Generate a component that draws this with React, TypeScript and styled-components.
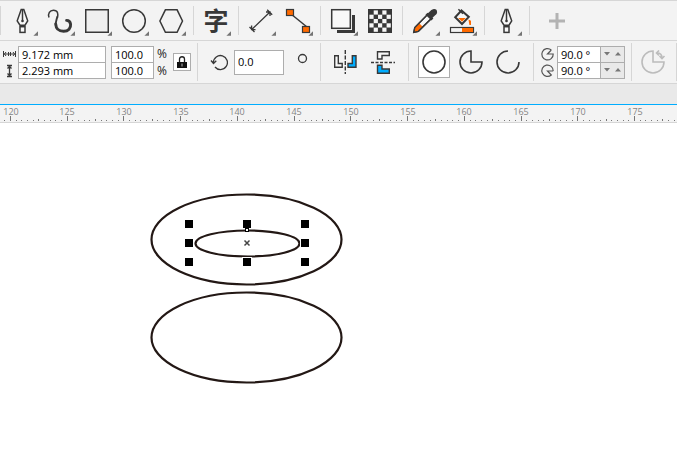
import React, { useEffect, useState } from "react";
import styled, { createGlobalStyle } from "styled-components";

const INK = "#383838";
const ORANGE = "#ff6a00";
const BLUE = "#00adff";
const EDGE = "#d6d6d6";
const FIELD_EDGE = "#adadad";
const UI_FONT = '"Open Sans", "Noto Sans", sans-serif';

const GlobalStyle = createGlobalStyle`
  *, *::before, *::after { box-sizing: border-box; }
  body { margin: 0; background: #fff; font-family: ${UI_FONT}; font-size: 11px; }
  button, input { font: inherit; color: #000; }
  svg { display: block; }
`;

const App = styled.div`
  display: flex;
  flex-direction: column;
  min-height: 100vh;
  overflow: hidden;
`;

const Bar = styled.div<{ $height: number }>`
  display: flex;
  flex: none;
  height: ${(p) => p.$height}px;
  background: #f3f3f3;
  border-top: 1px solid ${EDGE};
`;

const ToolGroup = styled.div`
  display: flex;
  flex: none;
  margin: 5px 0;
  padding-right: 7px;
  align-items: center;
  border-left: 1px solid ${EDGE};
`;

const ToolButton = styled.button<{ $width?: number }>`
  flex: none;
  width: ${(p) => p.$width ?? 37}px;
  height: 39px;
  padding: 0;
  border: 0;
  background: none;
`;

const PropertyGroup = styled.div<{ $pad: number; $gap?: number; $last?: boolean }>`
  display: flex;
  flex: none;
  align-items: center;
  gap: ${(p) => p.$gap ?? 0}px;
  margin: 2px 0;
  padding: 0 ${(p) => p.$pad}px;
  border-left: 1px solid ${EDGE};
  border-right: ${(p) => (p.$last ? `1px solid ${EDGE}` : "0")};
  &:first-child { border-left: 0; padding-left: 3px; }
`;

const Row = styled.div<{ $gap: number }>`
  display: flex;
  align-items: center;
  gap: ${(p) => p.$gap}px;
`;

const Stack = styled.div`
  display: flex;
  flex-direction: column;
  gap: 1px;
  span { width: 11px; height: 16px; line-height: 16px; font-size: 12px; color: #222; }
`;

const FieldPair = styled.div<{ $width: number }>`
  display: flex;
  flex-direction: column;
  width: ${(p) => p.$width}px;
  gap: 1px;
  padding: 1px;
  background: ${FIELD_EDGE};
`;

const Field = styled.input`
  flex: 1;
  width: 100%;
  min-width: 0;
  height: 15px;
  padding: 0 3px;
  border: 0;
  border-radius: 0;
  background: #fff;
  outline: 0;
`;

const AngleField = styled.input`
  width: 50px;
  height: 25px;
  padding: 0 3px 2px;
  border: 1px solid ${FIELD_EDGE};
  background: #fff;
  outline: 0;
`;

const SpinRow = styled.div`
  display: flex;
  height: 15px;
  background: #e9e9e9;
`;

const SpinButton = styled.button<{ $first?: boolean }>`
  flex: none;
  display: grid;
  place-items: center;
  width: 12px;
  height: 15px;
  padding: 0;
  border: 0;
  background: #e9e9e9;
  ${(p) => p.$first && `border-left: 1px solid ${FIELD_EDGE};`}
`;

const BoxButton = styled.button<{ $size: number; $on?: boolean }>`
  flex: none;
  display: grid;
  place-items: center;
  width: ${(p) => p.$size}px;
  height: ${(p) => p.$size}px;
  padding: 0;
  border: 1px solid ${(p) => (p.$on ? FIELD_EDGE : "transparent")};
  background: ${(p) => (p.$on ? "#fff" : "none")};
`;

const TabStrip = styled.div`
  flex: none;
  height: 21px;
  background: #e9e9e9;
  border-top: 1px solid ${EDGE};
`;

const RulerBand = styled.div`
  flex: none;
  height: 19px;
  background: #f3f3f3;
  border-top: 1px solid ${BLUE};
  border-bottom: 1px solid ${EDGE};
  svg { width: 100%; height: 17px; }
  text { font-family: ${UI_FONT}; font-size: 9px; fill: #858585; text-anchor: middle; }
`;

const Canvas = styled.main`
  flex: 1;
  display: flex;
  background: #fff;
  svg { width: 100%; height: 328px; }
`;

const Glyph = styled.text`
  font-family: "Noto Sans CJK SC", sans-serif;
  font-size: 25px;
  font-weight: 700;
  text-anchor: middle;
  fill: ${INK};
`;

type ToolProps = { label: string; children: React.ReactNode; flyout?: boolean; width?: number };

const Tool = ({ label, children, flyout = true, width = 37 }: ToolProps) => (
  <ToolButton type="button" aria-label={label} title={label} $width={width}>
    <svg width={width} height="39" viewBox={`0 1 ${width} 39`} fill="none" stroke={INK} strokeWidth="1.5">
      {children}
      {flyout && <path d="M37 31.3V35.7H32.4Z" fill="#747474" stroke="none" />}
    </svg>
  </ToolButton>
);

const Pen = () => (
  <>
    <path d="M20.2 9.5H22.8L26.7 20.8L24 25.2H19L16.2 20.8Z" fill="#f8f8f8" />
    <path d="M21.5 9V20.5" />
    <circle cx="21.5" cy="21" r="1.3" fill={INK} stroke="none" />
    <rect x="19" y="26.7" width="5" height="5.7" fill="#f8f8f8" />
  </>
);

const checks = Array.from({ length: 25 }, (_, i) => i).filter((i) => i % 2 === 1);
const PIE = "M12 1V12H23A11 11 0 1 1 12 1Z";

const Mini = ({ path }: { path: string }) => (
  <svg width="15" height="16" viewBox="0 0 15 16" fill="none" stroke="#555" strokeWidth="1.2">
    <path d={path} />
  </svg>
);

const Spinner = ({ label }: { label: string }) => (
  <SpinRow>
    <Field aria-label={label} defaultValue="90.0 °" />
    <SpinButton type="button" $first aria-label={`${label} down`}>
      <svg width="6" height="4"><path d="M0 0H6L3 3.5Z" fill="#777" /></svg>
    </SpinButton>
    <SpinButton type="button" aria-label={`${label} up`}>
      <svg width="6" height="4"><path d="M0 3.5H6L3 0Z" fill="#777" /></svg>
    </SpinButton>
  </SpinRow>
);

const RULER_START = 10.5;
const TICK = 5.673;

const Ruler = () => {
  const [width, setWidth] = useState(window.innerWidth);
  useEffect(() => {
    const update = () => setWidth(window.innerWidth);
    window.addEventListener("resize", update);
    return () => window.removeEventListener("resize", update);
  }, []);
  const tickCount = Math.ceil(width / TICK);
  const labelCount = Math.floor((width - RULER_START - 10) / (TICK * 10)) + 1;
  return (
    <RulerBand>
      <svg aria-label="Ruler">
        {Array.from({ length: tickCount + 1 }, (_, n) => {
          const i = n - 1;
          const size = i % 10 === 0 ? 5 : i % 5 === 0 ? 2 : 1;
          return (
            <rect
              key={i}
              x={Math.round(RULER_START + i * TICK - 0.5)}
              y={i % 10 === 0 ? 11 : 16 - size}
              width="1"
              height={size}
              fill="#777"
            />
          );
        })}
        {Array.from({ length: labelCount }, (_, i) => (
          <text key={i} x={Math.round(RULER_START + i * TICK * 10)} y="10">{120 + i * 5}</text>
        ))}
      </svg>
    </RulerBand>
  );
};

const handles = [189, 247, 305].flatMap((x) =>
  [101, 120, 139].map((y) => ({ x, y })).filter((h) => h.x !== 247 || h.y !== 120)
);

export default function DrawingApp() {
  return (
    <App>
      <GlobalStyle />
      <Bar $height={40} role="toolbar" aria-label="Tools">
        <ToolGroup>
          <Tool label="Pen"><Pen /></Tool>
          <Tool label="Artistic media">
            <path d="M11 17.5C9.6 13.5 11.8 10.2 15.4 10.2C20 10.2 20.3 13.8 19.4 17.5" />
            <path d="M19.4 16.5C18.4 20.5 17.3 22.5 17.8 25.5" strokeWidth="1.9" />
            <path d="M17.7 24C18 29 21.2 31.3 25.6 31.3C30.5 31.3 33 28 32.6 24.2C32.2 21.5 30.6 20.4 28.6 20.4" strokeWidth="2.9" strokeLinecap="round" />
          </Tool>
          <Tool label="Rectangle">
            <rect x="10.75" y="9.75" width="22.5" height="22.5" fill="#efefef" />
          </Tool>
          <Tool label="Ellipse">
            <circle cx="22" cy="21" r="11.3" />
          </Tool>
          <Tool label="Polygon">
            <path d="M16.4 9.8H28.1L33.5 21L28.1 32.3H16.4L10.9 21Z" />
          </Tool>
        </ToolGroup>
        <ToolGroup>
          <Tool label="Text"><Glyph x="22" y="30" stroke="none">字</Glyph></Tool>
        </ToolGroup>
        <ToolGroup>
          <Tool label="Dimension">
            <path d="M12.8 29.5L30.7 12.2M10.5 27L15.5 32M28.2 9.8L33.2 14.8M12.6 25.5V29.7H16.5M27 12H31V16" strokeWidth="1.3" />
          </Tool>
          <Tool label="Connector">
            <path d="M15 14L31 27" />
            <rect x="10.5" y="9.5" width="7" height="6" fill={ORANGE} strokeWidth="1.2" />
            <rect x="26.5" y="26.5" width="7" height="6" fill={ORANGE} strokeWidth="1.2" />
          </Tool>
        </ToolGroup>
        <ToolGroup>
          <Tool label="Drop shadow">
            <rect x="10.7" y="9.7" width="18.6" height="18.6" fill="#f8f8f8" />
            <path d="M32.5 15V31.4H16" strokeWidth="3" />
          </Tool>
          <Tool label="Transparency" flyout={false}>
            <rect x="10" y="9" width="24" height="24" fill={INK} stroke="none" />
            {checks.map((i) => (
              <rect key={i} x={11.4 + (i % 5) * 4.3} y={10.4 + Math.floor(i / 5) * 4.3} width="4.2" height="4.2" fill="#f6f6f6" stroke="none" />
            ))}
          </Tool>
        </ToolGroup>
        <ToolGroup>
          <Tool label="Eyedropper">
            <path d="M24.5 14.6L28.4 18.5L15.3 31.3L10.8 32.3L11.8 27.6Z" fill="#f8f8f8" />
            <path d="M16.5 23.6L19.7 26.8L15 31.2L11.1 32.1L12 27.9Z" fill={ORANGE} stroke="none" />
            <path d="M24.5 14.6L11.8 27.6L10.8 32.3L15.3 31.3L28.4 18.5" strokeWidth="1.3" />
            <path d="M23.5 13.7L29.4 19.6" strokeWidth="2.8" />
            <path d="M25.8 16.8L30.8 12.2" strokeWidth="6.4" />
            <circle cx="31.2" cy="12" r="2.9" fill={INK} stroke="none" />
          </Tool>
          <Tool label="Interactive fill">
            <path d="M21.5 10.5L28.8 16.9L22 24L15.2 17.2Z" fill="#f8f8f8" strokeWidth="2" />
            <path d="M18.2 18H25.8L22 21.8Z" fill={ORANGE} stroke="none" />
            <path d="M28.5 19.5L31 20.8V25H29.4Z" fill={ORANGE} stroke="none" />
            <path d="M18.4 9.2L23 13.8" />
            <rect x="10.5" y="27.5" width="23" height="5" fill="#f3f3f3" strokeWidth="1.2" />
            <rect x="22" y="28" width="11" height="4" fill={ORANGE} stroke="none" />
          </Tool>
        </ToolGroup>
        <ToolGroup>
          <Tool label="Outline pen"><Pen /></Tool>
        </ToolGroup>
        <ToolGroup>
          <Tool label="Customize" flyout={false} width={54}>
            <path d="M19 21H35M27 13V29" stroke="#b3b3b3" strokeWidth="3" />
          </Tool>
        </ToolGroup>
      </Bar>

      <Bar $height={43} role="toolbar" aria-label="Properties">
        <PropertyGroup $pad={6} $gap={5}>
          <Row $gap={1}>
            <Stack>
              <svg width="14" height="16" fill="none" stroke={INK}>
                <path d="M.5 5V11M12.5 5V11M1 8H12M3 6L1.5 8L3 10M10 6L11.5 8L10 10" /><path d="M5.5 6V10M7.5 6V10" />
              </svg>
              <svg width="14" height="16" fill="none" stroke={INK} strokeWidth="1.3">
                <path d="M4 2.5H9M4 13.5H9M6.5 3V13M4.5 5.5L6.5 3.5L8.5 5.5M4.5 10.5L6.5 12.5L8.5 10.5" />
              </svg>
            </Stack>
            <FieldPair $width={88}>
              <Field aria-label="Width" defaultValue="9.172 mm" />
              <Field aria-label="Height" defaultValue="2.293 mm" />
            </FieldPair>
          </Row>
          <Row $gap={3}>
            <FieldPair $width={43}>
              <Field aria-label="Horizontal scale" defaultValue="100.0" />
              <Field aria-label="Vertical scale" defaultValue="100.0" />
            </FieldPair>
            <Stack><span>%</span><span>%</span></Stack>
          </Row>
          <BoxButton type="button" $size={18} $on aria-label="Lock ratio">
            <svg width="12" height="14" fill="none">
              <path d="M3.5 7V4C3.5 1 8.5 1 8.5 4V7" stroke="#222" strokeWidth="1.3" />
              <rect x="1" y="7" width="10" height="6" fill="#111" />
              <path d="M6 8.5V11.5" stroke="#bbb" />
            </svg>
          </BoxButton>
        </PropertyGroup>
        <PropertyGroup $pad={12} $gap={6}>
          <svg width="18" height="24" fill="none" stroke={INK} strokeWidth="1.3">
            <path d="M3.4 12.5A7 7 0 1 1 5 17M1 10.5L3.5 13.5L6.3 10.8" />
          </svg>
          <Row $gap={12}>
            <AngleField aria-label="Rotation angle" defaultValue="0.0" />
            <svg width="12" height="24" fill="none" stroke={INK} strokeWidth="1.3"><circle cx="6.5" cy="8.5" r="4" /></svg>
          </Row>
        </PropertyGroup>
        <PropertyGroup $pad={9} $gap={5}>
          <BoxButton type="button" $size={32} aria-label="Mirror horizontally">
            <svg width="24" height="24" fill="none" stroke={INK} strokeWidth="1.4">
              <path d="M.7 5.7H4.3V13.5H8.2V17.3H.7Z" fill="#f8f8f8" />
              <path d="M22 5.7H18.3V13.5H14V17.3H22Z" fill={BLUE} />
              <path d="M11.3 0V24" strokeDasharray="4 1.5" />
            </svg>
          </BoxButton>
          <BoxButton type="button" $size={32} aria-label="Mirror vertically">
            <svg width="24" height="24" fill="none" stroke={INK} strokeWidth="1.4">
              <path d="M6.5 1.7H18.3V5.5H11V9H6.5Z" fill="#f8f8f8" />
              <path d="M6.5 15.3H11V19H18.3V23.2H6.5Z" fill={BLUE} />
              <path d="M0 12.5H24" strokeDasharray="3 1.5" />
            </svg>
          </BoxButton>
        </PropertyGroup>
        <PropertyGroup $pad={9} $gap={5}>
          <BoxButton type="button" $size={32} $on aria-label="Ellipse">
            <svg width="24" height="24" fill="none" stroke={INK} strokeWidth="1.6"><circle cx="12" cy="12" r="11" /></svg>
          </BoxButton>
          <BoxButton type="button" $size={32} aria-label="Pie">
            <svg width="24" height="24" fill="none" stroke={INK} strokeWidth="1.6"><path d={PIE} /></svg>
          </BoxButton>
          <BoxButton type="button" $size={32} aria-label="Arc">
            <svg width="24" height="24" fill="none" stroke={INK} strokeWidth="1.6"><path d="M23 12A11 11 0 1 1 12 1" /></svg>
          </BoxButton>
        </PropertyGroup>
        <PropertyGroup $pad={6} $gap={2}>
          <Stack>
            <Mini path="M11.3 4A5.7 5.7 0 1 0 13.2 8H7.5L11.3 4M7.5 8L10 5.4" />
            <Mini path="M13.2 8A5.7 5.7 0 1 0 11.3 12L7.5 8H13.2M7.5 8L10 10.6" />
          </Stack>
          <FieldPair $width={68}>
            <Spinner label="Starting angle" />
            <Spinner label="Ending angle" />
          </FieldPair>
        </PropertyGroup>
        <PropertyGroup $pad={6} $last>
          <BoxButton type="button" $size={32} disabled aria-label="Change direction">
            <svg width="26" height="24" fill="none" stroke="#bcbcbc" strokeWidth="1.6">
              <path d="M12 1V12H23A11 11 0 1 1 12 1Z" />
              <path d="M16 3Q21 3 21 8M18 .5L15.5 3L18 5.5M18.5 6L21 8.5L23.5 6" />
            </svg>
          </BoxButton>
        </PropertyGroup>
      </Bar>
      <TabStrip />
      <Ruler />
      <Canvas>
        <svg aria-label="Drawing canvas" fill="none" stroke="#231815" strokeWidth="2.2">
          <ellipse cx="246.5" cy="116.5" rx="95" ry="45" />
          <ellipse cx="246.5" cy="214.5" rx="95" ry="45" />
          <ellipse cx="247.5" cy="120.5" rx="52" ry="13" />
          {handles.map((h) => (
            <rect key={`${h.x}-${h.y}`} x={h.x - 4} y={h.y - 4} width="8" height="8" fill="#000" stroke="#fff" strokeWidth="2" paintOrder="stroke" />
          ))}
          <rect x="245" y="105" width="4" height="4" fill="#000" stroke="none" />
          <rect x="246" y="106" width="2" height="2" fill="#fff" stroke="none" />
          <path d="M244.5 117.5L249.5 122.5M249.5 117.5L244.5 122.5" stroke="#444" strokeWidth="1.5" />
        </svg>
      </Canvas>
    </App>
  );
}
